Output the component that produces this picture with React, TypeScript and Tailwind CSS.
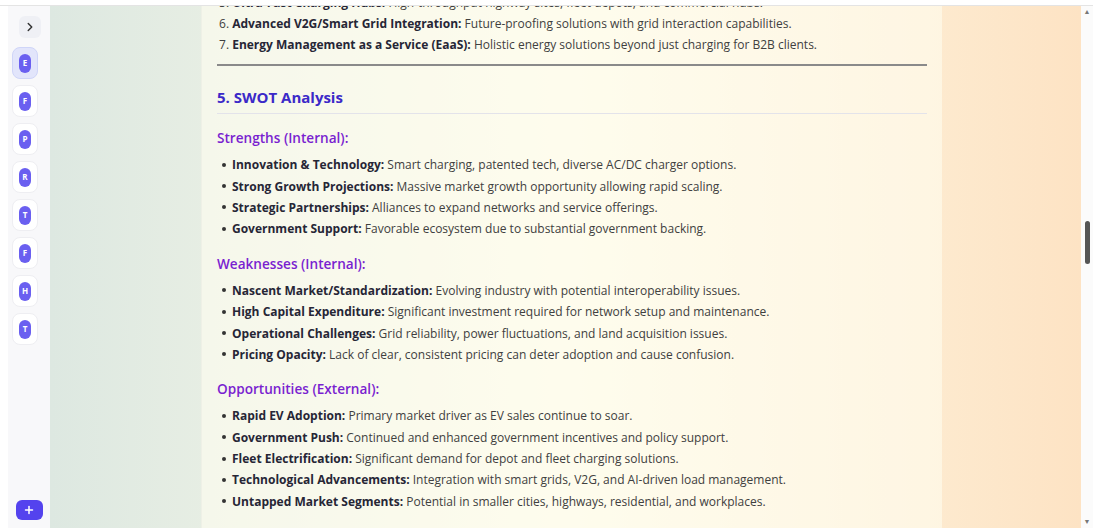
import { ChevronRight, Plus } from "lucide-react";

const font = { fontFamily: '"Open Sans", "Noto Sans", sans-serif' };

const numbered = [
  { n: 5, b: "Ultra-Fast Charging Hubs:", t: "High-throughput highway sites, fleet depots, and commercial hubs." },
  { n: 6, b: "Advanced V2G/Smart Grid Integration:", t: "Future-proofing solutions with grid interaction capabilities." },
  { n: 7, b: "Energy Management as a Service (EaaS):", t: "Holistic energy solutions beyond just charging for B2B clients." },
];

const sections = [
  {
    title: "Strengths (Internal):",
    items: [
      ["Innovation & Technology:", "Smart charging, patented tech, diverse AC/DC charger options."],
      ["Strong Growth Projections:", "Massive market growth opportunity allowing rapid scaling."],
      ["Strategic Partnerships:", "Alliances to expand networks and service offerings."],
      ["Government Support:", "Favorable ecosystem due to substantial government backing."],
    ],
  },
  {
    title: "Weaknesses (Internal):",
    items: [
      ["Nascent Market/Standardization:", "Evolving industry with potential interoperability issues."],
      ["High Capital Expenditure:", "Significant investment required for network setup and maintenance."],
      ["Operational Challenges:", "Grid reliability, power fluctuations, and land acquisition issues."],
      ["Pricing Opacity:", "Lack of clear, consistent pricing can deter adoption and cause confusion."],
    ],
  },
  {
    title: "Opportunities (External):",
    items: [
      ["Rapid EV Adoption:", "Primary market driver as EV sales continue to soar."],
      ["Government Push:", "Continued and enhanced government incentives and policy support."],
      ["Fleet Electrification:", "Significant demand for depot and fleet charging solutions."],
      ["Technological Advancements:", "Integration with smart grids, V2G, and AI-driven load management."],
      ["Untapped Market Segments:", "Potential in smaller cities, highways, residential, and workplaces."],
    ],
  },
];

const letters = ["E", "F", "P", "R", "T", "F", "H", "T"];

function Tile({ letter, active }: { letter: string; active?: boolean }) {
  return (
    <div
      className={`w-[26px] h-[32px] rounded-lg border flex items-center justify-center ${
        active ? "bg-[#e2e5fb] border-[#cfd5f8]" : "bg-white border-[#eeeef2]"
      }`}
    >
      <div className="w-[12px] h-[19px] rounded-full bg-[#6a5ff0] flex items-center justify-center text-white text-[8px] font-bold">
        {letter}
      </div>
    </div>
  );
}

export default function App() {
  return (
    <div className="h-[528px] w-full flex flex-col bg-white overflow-hidden" style={font}>
      <div className="h-[6px] shrink-0 bg-white border-b border-[#e4e4e4]" />
      <div className="flex flex-1 min-h-0">
        <div className="w-[8px] shrink-0 bg-white" />
        {/* Sidebar */}
        <div className="w-[42px] shrink-0 bg-[#f8f8fa] flex flex-col items-center pt-[10px] pb-[8px]">
          <div className="w-[22px] h-[22px] rounded-md bg-[#eff0f5] flex items-center justify-center ml-[2px]">
            <ChevronRight size={14} strokeWidth={2.5} className="text-[#333]" />
          </div>
          <div className="flex flex-col gap-[6px] mt-[9px] mr-[8px]">
            {letters.map((l, i) => (
              <Tile key={i} letter={l} active={i === 0} />
            ))}
          </div>
          <div className="flex-1" />
          <div className="w-[27px] h-[20px] rounded-md bg-[#5443ee] flex items-center justify-center">
            <Plus size={12} strokeWidth={3} className="text-white" />
          </div>
        </div>
        {/* Main */}
        <div className="flex-1 min-w-0 h-full bg-gradient-to-r from-[#dde8e1] via-[#fdfbe9] to-[#fde3c4] overflow-hidden flex">
          <div className="ml-[151px] w-[741px] h-full overflow-hidden bg-[#fffdf0]/60 border-l border-[#eef0e6] px-[15px]">
            <div className="-mt-[14px]">
              <ol className="flex flex-col text-[12px] text-[#404040]">
                {numbered.map((it) => (
                  <li key={it.n} className="h-[21px] leading-[21px] pl-[2px]">
                    {it.n}. <span className="font-bold text-[#262636]">{it.b}</span> {it.t}
                  </li>
                ))}
              </ol>
              <div className="h-[2px] bg-[#8a8a8a] mt-[9px]" />
              <h2 className="text-[15px] font-bold text-[#3b29c8] mt-[20px] leading-[22px]">5. SWOT Analysis</h2>
              <div className="h-px bg-[#e3e3ea] mt-[5px]" />
              {sections.map((s) => (
                <div key={s.title} className="mt-[13px]">
                  <h3 className="text-[13.6px] font-semibold text-[#7a1fd0] leading-[22px]">{s.title}</h3>
                  <ul className="mt-[5px] flex flex-col text-[12px] text-[#404040]">
                    {s.items.map(([b, t]) => (
                      <li key={b} className="h-[21.4px] leading-[21px] flex items-center">
                        <span className="w-[4px] h-[4px] rounded-full bg-[#333] ml-[5px] mr-[6px]" />
                        <span>
                          <span className="font-bold text-[#262636]">{b}</span> {t}
                        </span>
                      </li>
                    ))}
                  </ul>
                </div>
              ))}
            </div>
          </div>
        </div>
        {/* Scrollbar */}
        <div className="w-[12px] shrink-0 bg-[#fbfbfb] flex flex-col items-center">
          <div className="h-[12px] flex items-center justify-center text-[7px] text-[#777]">▲</div>
          <div className="h-[203px]" />
          <div className="w-[5px] h-[43px] rounded-full bg-[#555]" />
          <div className="flex-1" />
          <div className="h-[12px] flex items-center justify-center text-[7px] text-[#777]">▼</div>
        </div>
      </div>
    </div>
  );
}
